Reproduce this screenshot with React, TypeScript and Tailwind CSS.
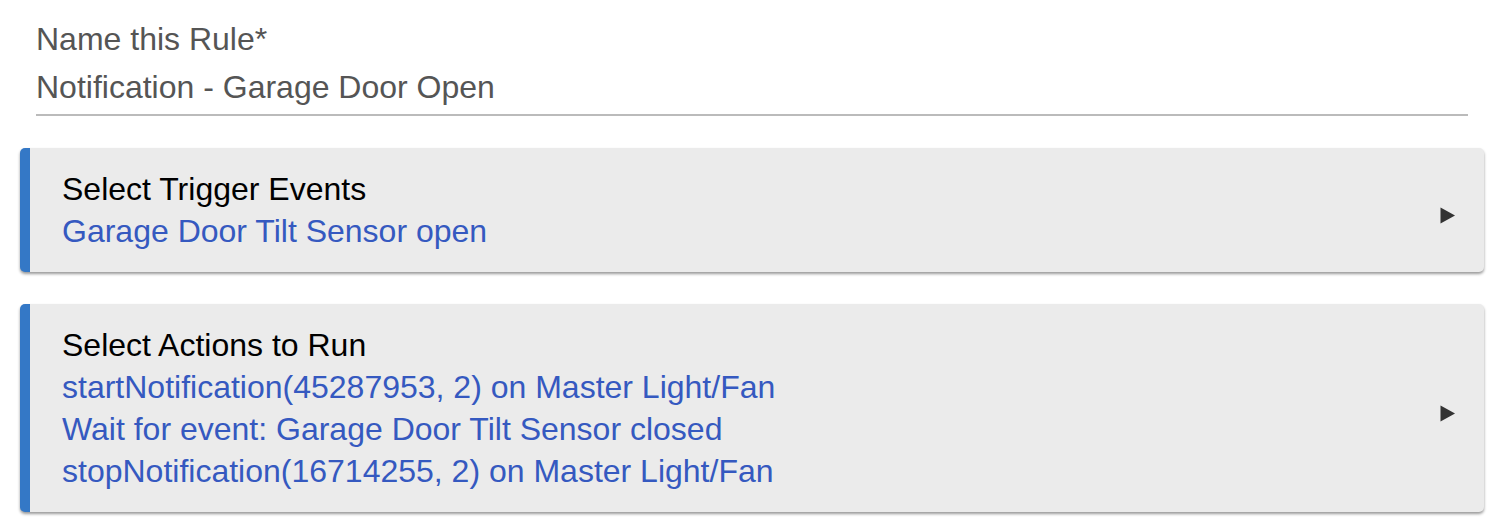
import React from "react";

function Arrow() {
  return (
    <svg width="16" height="17" viewBox="0 0 16 17" className="mt-[10px] shrink-0">
      <path d="M0.5 0.5 L15 8.5 L0.5 16.5 Z" fill="#333" />
    </svg>
  );
}

function Card({ title, lines }: { title: string; lines: string[] }) {
  return (
    <div className="flex items-center rounded-[5px] border-l-[10px] border-[#3478c6] bg-[#ebebeb] py-5 pl-[32px] pr-[28px] shadow-[0_2px_3px_rgba(0,0,0,0.4)]">
      <div className="flex-1 text-[32px] leading-[42px]">
        <div className="text-black">{title}</div>
        {lines.map((l) => (
          <div key={l} className="text-[#3559c0]">
            {l}
          </div>
        ))}
      </div>
      <Arrow />
    </div>
  );
}

export default function App() {
  return (
    <div
      className="min-h-[530px] w-[1506px] bg-white pt-[18px]"
      style={{ fontFamily: '"Liberation Sans", Arial, sans-serif' }}
    >
      <div className="ml-[36px] mr-[38px]">
        <div className="text-[32px] leading-[42px] text-[#555]">Name this Rule*</div>
        <div className="mt-[6px] border-b-2 border-[#bbbbbb] pb-[6px] text-[32px] leading-[42px] text-[#555]">
          Notification - Garage Door Open
        </div>
      </div>
      <div className="ml-[20px] mr-[22px] mt-[32px] flex flex-col gap-[32px]">
        <Card title="Select Trigger Events" lines={["Garage Door Tilt Sensor open"]} />
        <Card
          title="Select Actions to Run"
          lines={[
            "startNotification(45287953, 2) on Master Light/Fan",
            "Wait for event: Garage Door Tilt Sensor closed",
            "stopNotification(16714255, 2) on Master Light/Fan",
          ]}
        />
      </div>
    </div>
  );
}
